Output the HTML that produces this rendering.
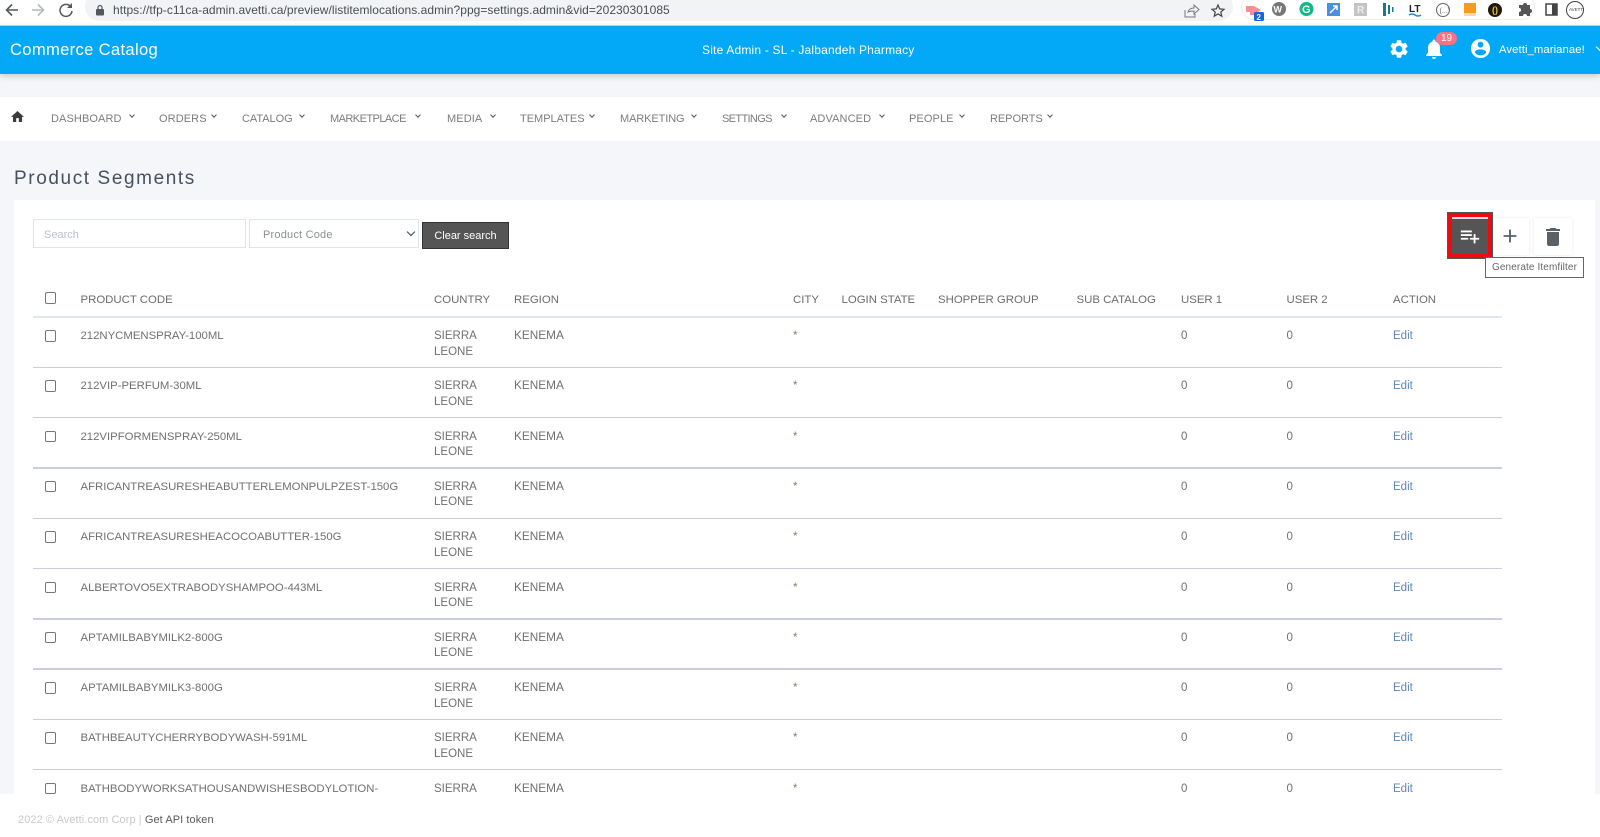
<!DOCTYPE html>
<html><head><meta charset="utf-8"><title>Product Segments</title>
<style>
html,body{margin:0;padding:0;width:1600px;height:837px;overflow:hidden;background:#fff;font-family:"Liberation Sans",sans-serif;color:#666}
*{box-sizing:border-box}
.a{position:absolute}
.t{position:absolute;white-space:nowrap}
#chrome{left:0;top:0;width:1600px;height:25px;background:#fff}
#pill{left:85px;top:-8px;width:1148px;height:29px;background:#f1f3f4;border-radius:15px}
#ext{left:1241px;top:-6px;width:294px;height:26px;background:#fff;border:1px solid #eceef0;border-radius:13px}
#url{left:113px;top:3px;font-size:12px;line-height:14px;color:#4a4d52;letter-spacing:.04px}
#head{left:0;top:25px;width:1600px;height:49px;background:#03a9f6;border-top:1px solid #9fdcf8;box-shadow:0 2px 6px rgba(0,0,0,.18);color:#fff}
#bg{left:0;top:74px;width:1600px;height:720px;background:#f4f6fa}
#nav{left:0;top:97px;width:1600px;height:44px;background:#fff}
.n{position:absolute;top:15px;font-size:11px;line-height:14px;color:#7c7c7c;letter-spacing:.1px;white-space:nowrap}
.c{position:absolute;top:17px;width:4px;height:4px;border-right:1.3px solid #555;border-bottom:1.3px solid #555;transform:rotate(45deg)}
#title{left:14px;top:167px;font-size:19px;line-height:23px;color:#46505f;letter-spacing:1.6px}
#card{left:14px;top:200px;width:1581px;height:594px;background:#fff;overflow:hidden}
.box{position:absolute;background:#fff;border:1px solid #dfe5f0}
.cb{position:absolute;width:11.5px;height:11.5px;border:1px solid #767676;border-radius:2px;background:#fff}
.row{position:absolute;left:0;width:1488px;height:51px;font-size:11.5px;line-height:15.5px;color:#707070}
.row .l{position:absolute;left:19px;right:0;bottom:0;height:1.4px;background:#c9ced8}
.row span{position:absolute;top:12px;white-space:nowrap}
.p{left:66.5px;font-size:11.35px}.co{left:420px}.row .re{left:500px;font-size:11.8px;top:11px}.ci{left:779px;color:#8a7a6a}.u1{left:1167px}.u2{left:1272.5px}.ed{left:1379px;color:#5f86b5}
#thead{left:0;top:85px;width:1488px;height:32px;font-size:11.4px;color:#6c6c6c}
#thead span{position:absolute;top:7px;line-height:16px;white-space:nowrap}
#foot{left:0;top:794px;width:1600px;height:43px;background:#fff;font-size:11px;color:#c9c9c9}
</style></head><body>

<div class="a" id="chrome">
<div class="a" id="pill"></div>
<div class="a" id="ext"></div>
<svg class="a" style="left:3px;top:1px" width="75" height="18" viewBox="0 0 75 18"><path d="M15 9H4M9 3.5 3.5 9 9 14.500" fill="none" stroke="#55585c" stroke-width="1.6"/><path d="M29 9h11M35 3.500 40.500 9 35 14.500" fill="none" stroke="#b5b8bc" stroke-width="1.600"/><path d="M68 6a6 6 0 1 0 1 4" fill="none" stroke="#55585c" stroke-width="1.500"/><path d="M69 2v5h-5z" fill="#55585c"/></svg>
<svg class="a" style="left:95px;top:4px" width="10" height="12" viewBox="0 0 10 12"><rect x="1" y="5" width="8" height="6.500" rx="1" fill="#55585c"/><path d="M3 5V3.500a2 2 0 0 1 4 0V5" fill="none" stroke="#55585c" stroke-width="1.200"/></svg>
<div class="t" id="url">https://tfp-c11ca-admin.avetti.ca/preview/listitemlocations.admin?ppg=settings.admin&amp;vid=20230301085</div>
<svg class="a" style="left:1182px;top:2px" width="44" height="18" viewBox="0 0 44 18"><path d="M3 8v7h10v-3M6 10c1-3 3-4 6-4V3l5 4.500-5 4.500V9c-2 0-4 0-6 1z" fill="none" stroke="#777" stroke-width="1"/><path d="M36 3l1.700 3.900 4.300.4-3.200 2.800 1 4.200-3.800-2.300-3.800 2.300 1-4.200-3.200-2.800 4.300-.4z" fill="none" stroke="#444" stroke-width="1.200"/></svg>
<svg class="a" style="left:1244px;top:0" width="356" height="24" viewBox="0 0 356 24">
<path d="M2 6h4l4 0 7 4-7 5H6l0-3H2z" fill="#ff8f8f"/><rect x="10" y="12" width="10" height="9" rx="1.500" fill="#1a62d6"/><text x="12.500" y="20" font-size="8" font-weight="700" fill="#fff" font-family="Liberation Sans">2</text>
<circle cx="35" cy="9" r="7" fill="#777"/><text x="29.500" y="12.500" font-size="9" font-weight="700" fill="#fff" font-family="Liberation Sans">W</text>
<circle cx="62.500" cy="9" r="7" fill="#11b884"/><text x="58" y="13" font-size="11" font-weight="700" fill="#fff" font-family="Liberation Sans">G</text>
<rect x="83" y="3" width="13" height="13" fill="#4a90e2"/><path d="M86 13l7-7M89 6h4v4" stroke="#fff" stroke-width="1.500" fill="none"/>
<rect x="110" y="3" width="13" height="13" fill="#c4c4c4"/><text x="113" y="13" font-size="10" font-weight="700" fill="#eee" font-family="Liberation Sans">R</text>
<path d="M139 3h3v13h-3zM144 5h2v9h-2zM148 7h1.500v5H148z" fill="#1b7a8a"/>
<text x="165" y="12" font-size="10" font-weight="700" fill="#222" font-family="Liberation Sans">LT</text><path d="M165 15q3-2 6 0t6 0" stroke="#1a8fd6" fill="none" stroke-width="1.500"/>
<circle cx="199" cy="10" r="6.500" fill="none" stroke="#666"/><text x="195.500" y="13" font-size="7" fill="#666" font-family="Liberation Sans">(...)</text>
<rect x="220" y="3" width="12" height="10" fill="#f79b1c"/><rect x="220" y="13" width="12" height="3" fill="#fbd9a5"/>
<circle cx="251" cy="10" r="7" fill="#1e1a10"/><text x="248" y="13" font-size="9" font-weight="700" fill="#e8c24a" font-family="Liberation Sans">()</text>
<path d="M275 5h4a2 2 0 0 1 4 0h3v4a2 2 0 0 1 0 4v3h-3a2 2 0 0 0-4 0h-4v-4a2 2 0 0 0 0-4z" fill="#555"/>
<rect x="302" y="4" width="11" height="11" fill="none" stroke="#444" stroke-width="1.500"/><rect x="308" y="4" width="5" height="11" fill="#444"/>
<circle cx="331" cy="10" r="8.500" fill="#fff" stroke="#444"/><text x="325" y="11" font-size="4.500" fill="#444" font-family="Liberation Sans">AVETTI</text>
</svg>
</div>

<div class="a" id="bg"></div>

<div class="a" id="head">
<div class="t" style="left:10px;top:14px;font-size:16.600px;line-height:20px;letter-spacing:.32px">Commerce Catalog</div>
<div class="t" style="left:702px;top:17px;font-size:12px;line-height:14px;letter-spacing:.19px">Site Admin - SL - Jalbandeh Pharmacy</div>
<svg class="a" style="left:1388px;top:12px" width="22" height="22" viewBox="0 0 24 24" fill="#fff"><path d="M19.14 12.94c.04-.3.06-.61.06-.94 0-.32-.02-.64-.07-.94l2.03-1.58c.18-.14.23-.41.12-.61l-1.92-3.32c-.12-.22-.37-.29-.59-.22l-2.39.96c-.5-.38-1.03-.7-1.62-.94l-.36-2.54c-.04-.24-.24-.41-.48-.41h-3.84c-.24 0-.43.17-.47.41l-.36 2.54c-.59.24-1.13.57-1.62.94l-2.39-.96c-.22-.08-.47 0-.59.22L2.74 8.87c-.12.21-.08.47.12.61l2.03 1.58c-.05.3-.09.63-.09.94s.02.64.07.94l-2.03 1.58c-.18.14-.23.41-.12.61l1.92 3.32c.12.22.37.29.59.22l2.39-.96c.5.38 1.03.7 1.62.94l.36 2.54c.05.24.24.41.48.41h3.84c.24 0 .44-.17.47-.41l.36-2.54c.59-.24 1.13-.56 1.62-.94l2.39.96c.22.08.47 0 .59-.22l1.92-3.32c.12-.22.07-.47-.12-.61l-2.01-1.58zM12 15.600c-1.980 0-3.600-1.620-3.600-3.600s1.620-3.600 3.600-3.600 3.600 1.620 3.600 3.600-1.620 3.600-3.600 3.600z"/></svg>
<svg class="a" style="left:1422px;top:11px" width="24" height="24" viewBox="0 0 24 24" fill="#fff"><path d="M12 22c1.100 0 2-.9 2-2h-4c0 1.100.89 2 2 2zm6-6v-5c0-3.070-1.640-5.640-4.500-6.320V4c0-.83-.67-1.500-1.500-1.500s-1.500.67-1.500 1.500v.68C7.630 5.360 6 7.920 6 11v5l-2 2v1h16v-1l-2-2z"/></svg>
<div class="a" style="left:1436px;top:6px;width:21px;height:13px;background:#fb7185;border-radius:7px;font-size:10px;line-height:13px;text-align:center">19</div>
<svg class="a" style="left:1469px;top:11px" width="23" height="23" viewBox="0 0 24 24" fill="#fff"><path d="M12 2C6.480 2 2 6.480 2 12s4.480 10 10 10 10-4.480 10-10S17.520 2 12 2zm0 3c1.660 0 3 1.340 3 3s-1.340 3-3 3-3-1.340-3-3 1.340-3 3-3zm0 14.200c-2.500 0-4.710-1.280-6-3.220.03-1.990 4-3.080 6-3.080 1.990 0 5.970 1.090 6 3.080-1.290 1.940-3.500 3.220-6 3.220z"/></svg>
<div class="t" style="left:1499px;top:17px;font-size:11.300px;line-height:14px;letter-spacing:.08px">Avetti_marianae!</div>
<div class="a" style="left:1597px;top:18px;width:6px;height:6px;border-right:1.500px solid #fff;border-bottom:1.500px solid #fff;transform:rotate(45deg)"></div>
</div>

<div class="a" id="nav">
<svg class="a" style="left:11px;top:13px" width="13" height="13" viewBox="2 3 20 17" fill="#3c3c3c"><path d="M10 20v-6h4v6h5v-8h3L12 3 2 12h3v8z"/></svg>
<span class="n" style="left:51px">DASHBOARD</span><i class="c" style="left:130px;top:16px"></i>
<span class="n" style="left:159px">ORDERS</span><i class="c" style="left:212px;top:16px"></i>
<span class="n" style="left:242px;letter-spacing:-.05px">CATALOG</span><i class="c" style="left:300px;top:16px"></i>
<span class="n" style="left:330px;letter-spacing:-.55px">MARKETPLACE</span><i class="c" style="left:416px;top:16px"></i>
<span class="n" style="left:447px">MEDIA</span><i class="c" style="left:491px;top:16px"></i>
<span class="n" style="left:520px;letter-spacing:0">TEMPLATES</span><i class="c" style="left:590px;top:16px"></i>
<span class="n" style="left:620px;letter-spacing:-.1px">MARKETING</span><i class="c" style="left:692px;top:16px"></i>
<span class="n" style="left:722px;letter-spacing:-.65px">SETTINGS</span><i class="c" style="left:782px;top:16px"></i>
<span class="n" style="left:810px">ADVANCED</span><i class="c" style="left:880px;top:16px"></i>
<span class="n" style="left:909px">PEOPLE</span><i class="c" style="left:960px;top:16px"></i>
<span class="n" style="left:990px;letter-spacing:-.05px">REPORTS</span><i class="c" style="left:1048px;top:16px"></i>
</div>

<div class="t" id="title">Product Segments</div>

<div class="a" id="card">
<div class="box" style="left:19px;top:19px;width:213px;height:29px"></div>
<div class="t" style="left:30px;top:29px;font-size:11px;line-height:13px;color:#b9bfcd">Search</div>
<div class="box" style="left:235px;top:19px;width:170px;height:29px"></div>
<div class="t" style="left:249px;top:28.500px;font-size:11px;line-height:13px;color:#8b8f96;letter-spacing:.2px">Product Code</div>
<div class="a" style="left:394px;top:29px;width:6px;height:6px;border-right:1.600px solid #2f3f5f;border-bottom:1.600px solid #2f3f5f;transform:rotate(45deg)"></div>
<div class="a" style="left:408px;top:22px;width:87px;height:27px;background:#555;border:1px solid #333;color:#fff;font-size:11px;line-height:26px;text-align:center">Clear search</div>

<div class="a" style="left:1433px;top:12px;width:46px;height:47px;background:#ee0a12;border:1px solid #555"></div>
<div class="a" style="left:1438px;top:17px;width:36px;height:37px;background:#555;border-top:2px solid #ddd"></div>
<svg class="a" style="left:1445px;top:25px" width="22" height="22" viewBox="0 0 24 24" fill="#fff"><path d="M14 10H2v2h12v-2zm0-4H2v2h12V6zm4 8v-4h-2v4h-4v2h4v4h2v-4h4v-2h-4zM2 16h8v-2H2v2z"/></svg>
<div class="a" style="left:1479px;top:18px;width:36px;height:37px;background:#fff;box-shadow:0 0 3px rgba(0,0,0,.1)"></div>
<svg class="a" style="left:1485px;top:25px" width="22" height="22" viewBox="0 0 24 24" fill="#54606c"><path d="M19 13h-6v6h-2v-6H5v-2h6V5h2v6h6v2z"/></svg>
<div class="a" style="left:1520px;top:18px;width:38px;height:37px;background:#fff;box-shadow:0 0 3px rgba(0,0,0,.1)"></div>
<svg class="a" style="left:1527px;top:25px" width="24" height="24" viewBox="0 0 24 24" fill="#5c6166"><path d="M6 19c0 1.100.9 2 2 2h8c1.100 0 2-.9 2-2V7H6v12zM19 4h-3.500l-1-1h-5l-1 1H5v2h14V4z"/></svg>
<div class="a" style="left:1471px;top:57px;width:99px;height:21px;background:#fff;border:1px solid #666;font-size:10px;line-height:20px;text-align:center;color:#666;letter-spacing:.12px;white-space:nowrap">Generate Itemfilter</div>

<div class="a" id="thead">
<div class="cb" style="left:30.500px;top:7px"></div>
<span style="left:66.500px">PRODUCT CODE</span>
<span style="left:420px">COUNTRY</span><span style="left:500px">REGION</span><span style="left:779px">CITY</span><span style="left:827.500px">LOGIN STATE</span><span style="left:924px">SHOPPER GROUP</span><span style="left:1062.500px">SUB CATALOG</span><span style="left:1167px">USER 1</span><span style="left:1272.500px">USER 2</span><span style="left:1379px">ACTION</span>
</div>
<div class="a" style="left:19px;top:116px;width:1469px;height:1.500px;background:#dfe6ee"></div>

<div class="row" style="top:117px"><div class="cb" style="left:30.500px;top:13px"></div><span class="p">212NYCMENSPRAY-100ML</span><span class="co">SIERRA<br>LEONE</span><span class="re">KENEMA</span><span class="ci">*</span><span class="u1">0</span><span class="u2">0</span><span class="ed">Edit</span><div class="l"></div></div>
<div class="row" style="top:167.300px"><div class="cb" style="left:30.500px;top:13px"></div><span class="p">212VIP-PERFUM-30ML</span><span class="co">SIERRA<br>LEONE</span><span class="re">KENEMA</span><span class="ci">*</span><span class="u1">0</span><span class="u2">0</span><span class="ed">Edit</span><div class="l"></div></div>
<div class="row" style="top:217.600px"><div class="cb" style="left:30.500px;top:13px"></div><span class="p">212VIPFORMENSPRAY-250ML</span><span class="co">SIERRA<br>LEONE</span><span class="re">KENEMA</span><span class="ci">*</span><span class="u1">0</span><span class="u2">0</span><span class="ed">Edit</span><div class="l"></div></div>
<div class="row" style="top:267.900px"><div class="cb" style="left:30.500px;top:13px"></div><span class="p">AFRICANTREASURESHEABUTTERLEMONPULPZEST-150G</span><span class="co">SIERRA<br>LEONE</span><span class="re">KENEMA</span><span class="ci">*</span><span class="u1">0</span><span class="u2">0</span><span class="ed">Edit</span><div class="l"></div></div>
<div class="row" style="top:318.200px"><div class="cb" style="left:30.500px;top:13px"></div><span class="p">AFRICANTREASURESHEACOCOABUTTER-150G</span><span class="co">SIERRA<br>LEONE</span><span class="re">KENEMA</span><span class="ci">*</span><span class="u1">0</span><span class="u2">0</span><span class="ed">Edit</span><div class="l"></div></div>
<div class="row" style="top:368.500px"><div class="cb" style="left:30.500px;top:13px"></div><span class="p">ALBERTOVO5EXTRABODYSHAMPOO-443ML</span><span class="co">SIERRA<br>LEONE</span><span class="re">KENEMA</span><span class="ci">*</span><span class="u1">0</span><span class="u2">0</span><span class="ed">Edit</span><div class="l"></div></div>
<div class="row" style="top:418.800px"><div class="cb" style="left:30.500px;top:13px"></div><span class="p">APTAMILBABYMILK2-800G</span><span class="co">SIERRA<br>LEONE</span><span class="re">KENEMA</span><span class="ci">*</span><span class="u1">0</span><span class="u2">0</span><span class="ed">Edit</span><div class="l"></div></div>
<div class="row" style="top:469.100px"><div class="cb" style="left:30.500px;top:13px"></div><span class="p">APTAMILBABYMILK3-800G</span><span class="co">SIERRA<br>LEONE</span><span class="re">KENEMA</span><span class="ci">*</span><span class="u1">0</span><span class="u2">0</span><span class="ed">Edit</span><div class="l"></div></div>
<div class="row" style="top:519.400px"><div class="cb" style="left:30.500px;top:13px"></div><span class="p">BATHBEAUTYCHERRYBODYWASH-591ML</span><span class="co">SIERRA<br>LEONE</span><span class="re">KENEMA</span><span class="ci">*</span><span class="u1">0</span><span class="u2">0</span><span class="ed">Edit</span><div class="l"></div></div>
<div class="row" style="top:569.700px"><div class="cb" style="left:30.500px;top:13px"></div><span class="p">BATHBODYWORKSATHOUSANDWISHESBODYLOTION-</span><span class="co">SIERRA<br>LEONE</span><span class="re">KENEMA</span><span class="ci">*</span><span class="u1">0</span><span class="u2">0</span><span class="ed">Edit</span></div>
</div>

<div class="a" id="foot"><div class="t" style="left:18px;top:18.500px;line-height:14px;letter-spacing:.07px">2022 © Avetti.com Corp | <span style="color:#5a5a5a">Get API token</span></div></div>

</body></html>
